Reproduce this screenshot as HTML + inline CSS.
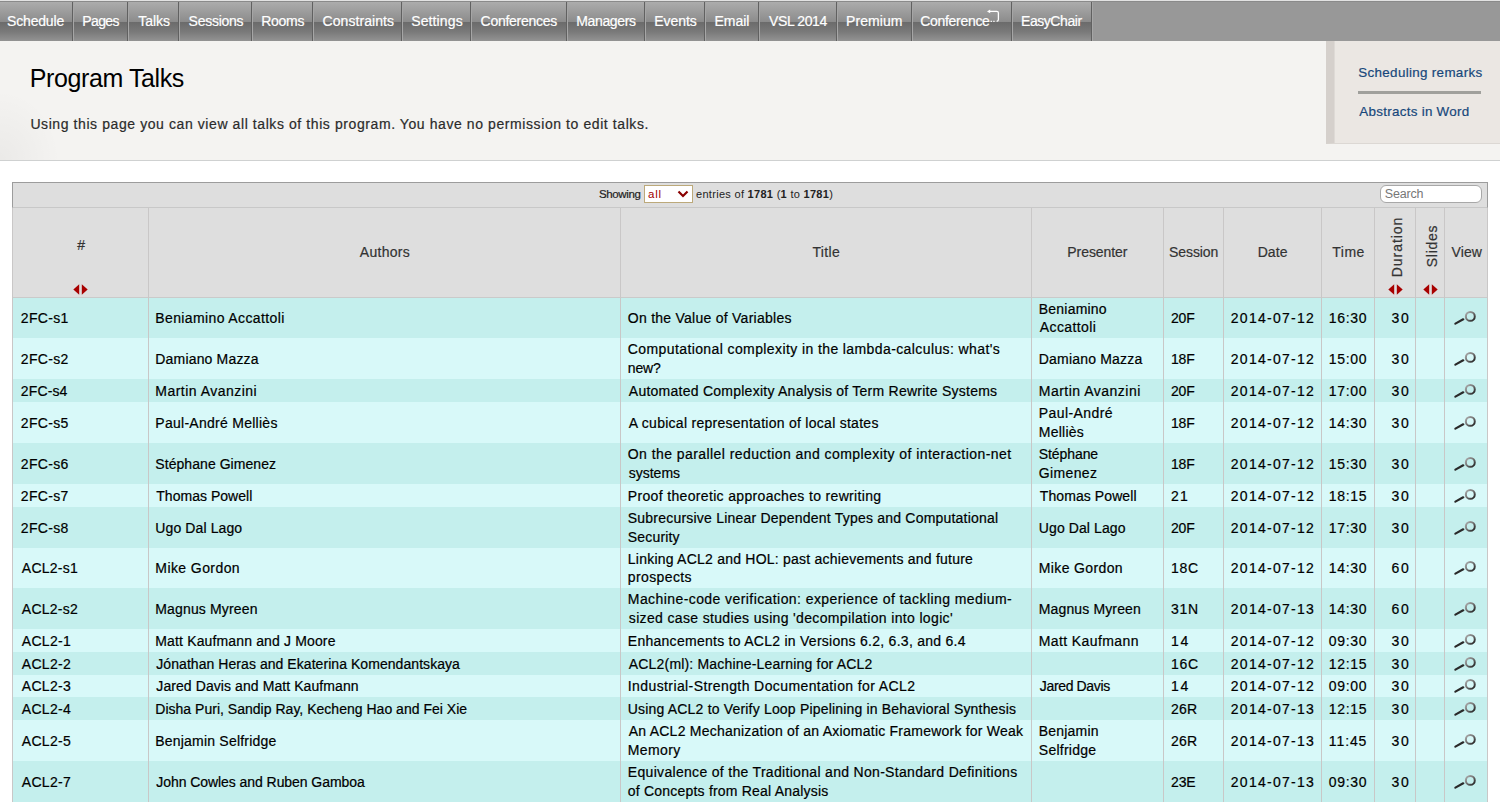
<!DOCTYPE html><html><head><meta charset="utf-8"><title>Program Talks</title><style>
*{margin:0;padding:0;box-sizing:border-box}
html,body{width:1500px;height:802px;overflow:hidden;background:#fff;font-family:"Liberation Sans",sans-serif}
.a{position:absolute;white-space:nowrap}
.tab{position:absolute;top:2px;height:39px;background:linear-gradient(#acacac 0px,#8c8c8c 19.6px,#6b6b6b 20.2px,#7a7a7a 30px,#939393 39px);color:#fff;font-size:13px;text-align:center;line-height:39px}
.sep{position:absolute;top:2px;width:1px;height:39px;background:#616161}
.sepl{position:absolute;top:2px;width:1px;height:39px;background:#a6a6a6}
.t{position:absolute;white-space:nowrap;line-height:18px}
.vl{position:absolute;width:1px;background:#c9c7c7}

</style></head><body>
<svg width="0" height="0" style="position:absolute"><defs><linearGradient id="mg" x1="0" y1="0" x2="1" y2="1"><stop offset="0" stop-color="#b0b0b0"/><stop offset="0.5" stop-color="#707070"/><stop offset="1" stop-color="#1a1a1a"/></linearGradient></defs></svg>
<div class="a" style="left:0;top:0;width:1500px;height:1px;background:#e2e2e2"></div>
<div class="a" style="left:0;top:1px;width:1500px;height:1px;background:#8a8a8a"></div>
<div class="a" style="left:0;top:2px;width:1500px;height:39px;background:#989898"></div>
<div class="tab" style="left:0px;width:72px"></div>
<div class="sep" style="left:72px"></div>
<div class="sepl" style="left:73px"></div>
<div class="tab" style="left:74px;width:53px"></div>
<div class="sep" style="left:127px"></div>
<div class="sepl" style="left:128px"></div>
<div class="tab" style="left:129px;width:49px"></div>
<div class="sep" style="left:178px"></div>
<div class="sepl" style="left:179px"></div>
<div class="tab" style="left:180px;width:71px"></div>
<div class="sep" style="left:251px"></div>
<div class="sepl" style="left:252px"></div>
<div class="tab" style="left:253px;width:59px"></div>
<div class="sep" style="left:312px"></div>
<div class="sepl" style="left:313px"></div>
<div class="tab" style="left:314px;width:87px"></div>
<div class="sep" style="left:401px"></div>
<div class="sepl" style="left:402px"></div>
<div class="tab" style="left:403px;width:67px"></div>
<div class="sep" style="left:470px"></div>
<div class="sepl" style="left:471px"></div>
<div class="tab" style="left:472px;width:94px"></div>
<div class="sep" style="left:566px"></div>
<div class="sepl" style="left:567px"></div>
<div class="tab" style="left:568px;width:76px"></div>
<div class="sep" style="left:644px"></div>
<div class="sepl" style="left:645px"></div>
<div class="tab" style="left:646px;width:58px"></div>
<div class="sep" style="left:704px"></div>
<div class="sepl" style="left:705px"></div>
<div class="tab" style="left:706px;width:52px"></div>
<div class="sep" style="left:758px"></div>
<div class="sepl" style="left:759px"></div>
<div class="tab" style="left:760px;width:76px"></div>
<div class="sep" style="left:836px"></div>
<div class="sepl" style="left:837px"></div>
<div class="tab" style="left:838px;width:73px"></div>
<div class="sep" style="left:911px"></div>
<div class="sepl" style="left:912px"></div>
<div class="tab" style="left:913px;width:98px"></div>
<div class="sep" style="left:1011px"></div>
<div class="sepl" style="left:1012px"></div>
<div class="tab" style="left:1013px;width:78px"></div>
<div class="sep" style="left:1091px"></div>
<div class="sepl" style="left:1092px"></div>
<svg class="a" style="left:985px;top:9px" width="16" height="15" viewBox="0 0 16 15"><path d="M4.6 2.4 H11.8 Q13.4 2.4 13.4 4 V10.6 Q13.4 12.3 11.8 12.3" fill="none" stroke="#fff" stroke-width="1.3"/><path d="M5.6 12.3 H11.2" fill="none" stroke="#fff" stroke-width="1.2" stroke-dasharray="1.3 1.4"/><path d="M2 2.4 L5.2 0.6 V4.2 Z" fill="#fff"/></svg>
<div class="a" style="left:0;top:41px;width:1500px;height:120px;background:#f4f3f1;border-bottom:1px solid #cfd1d1"></div>
<div class="a" style="left:0;top:41px;width:60px;height:119px;background:radial-gradient(ellipse 60px 70px at 0 119px, rgba(0,0,0,0.04), rgba(0,0,0,0))"></div>
<div class="a" style="left:1326px;top:41px;width:174px;height:103px;background:#ebe7e3;border-left:8px solid #d5d0cc;border-bottom:1px solid #dcd8d4;box-shadow:inset 1px 0 0 #dedad6"></div>
<div class="a" style="left:1358px;top:91px;width:123px;height:3px;background:#a0a09c"></div>
<div class="a" style="left:12px;top:182px;width:1476px;height:26px;background:#dedede;border:1px solid #9c9c9c;border-bottom:1px solid #c8c8c8"></div>
<div class="a" style="left:644px;top:185px;width:49px;height:18px;background:#fff;border:1px solid #bca97a"></div>
<svg class="a" style="left:677px;top:190px" width="12" height="8" viewBox="0 0 12 8"><path d="M1.5 1.5 L6 6 L10.5 1.5" fill="none" stroke="#8a0000" stroke-width="2.2"/></svg>
<div class="a" style="left:696px;top:187px;font-size:11px;line-height:14px;color:#222;letter-spacing:0.3px">entries of <b>1781</b> (<b>1</b> to <b>1781</b>)</div>
<div class="a" style="left:1380px;top:185px;width:102px;height:18px;background:#fff;border:1px solid #a8a8a8;border-radius:6px"></div>
<div class="a" style="left:12px;top:208px;width:1476px;height:90px;background:#dedede;border-left:1px solid #c8c8c8;border-right:1px solid #c8c8c8;border-bottom:1px solid #cacaca"></div>
<svg class="a" style="left:72.5px;top:283.5px" width="15" height="11" viewBox="0 0 15 11"><path d="M0.3 5.5 L6.2 0.3 V10.7 Z" fill="#a80000"/><path d="M14.7 5.5 L8.8 0.3 V10.7 Z" fill="#a80000"/></svg>
<div class="a" style="left:1396.5px;top:246.5px;transform:translate(-50%,-50%) rotate(-90deg);font-size:14px;letter-spacing:0.95px;line-height:18px;color:#333;-webkit-text-stroke:0.2px #333">Duration</div>
<div class="a" style="left:1431.5px;top:246px;transform:translate(-50%,-50%) rotate(-90deg);font-size:14px;letter-spacing:0.75px;line-height:18px;color:#333;-webkit-text-stroke:0.2px #333">Slides</div>
<svg class="a" style="left:1387.5px;top:283.5px" width="15" height="11" viewBox="0 0 15 11"><path d="M0.3 5.5 L6.2 0.3 V10.7 Z" fill="#a80000"/><path d="M14.7 5.5 L8.8 0.3 V10.7 Z" fill="#a80000"/></svg>
<svg class="a" style="left:1422.5px;top:283.5px" width="15" height="11" viewBox="0 0 15 11"><path d="M0.3 5.5 L6.2 0.3 V10.7 Z" fill="#a80000"/><path d="M14.7 5.5 L8.8 0.3 V10.7 Z" fill="#a80000"/></svg>
<div class="a" style="left:13px;top:298px;width:1474px;height:40px;background:#c4efed"></div>
<svg class="a" style="left:1453px;top:309.00px" width="24" height="16" viewBox="0 0 24 16"><path d="M2.4 14.6 L10.2 10.3" stroke="#2a2a2a" stroke-width="2.2" stroke-linecap="round"/><circle cx="17.3" cy="7.4" r="4.45" fill="none" stroke="url(#mg)" stroke-width="2"/></svg>
<div class="a" style="left:13px;top:338px;width:1474px;height:41px;background:#d8f9f9"></div>
<svg class="a" style="left:1453px;top:349.50px" width="24" height="16" viewBox="0 0 24 16"><path d="M2.4 14.6 L10.2 10.3" stroke="#2a2a2a" stroke-width="2.2" stroke-linecap="round"/><circle cx="17.3" cy="7.4" r="4.45" fill="none" stroke="url(#mg)" stroke-width="2"/></svg>
<div class="a" style="left:13px;top:379px;width:1474px;height:23px;background:#c4efed"></div>
<svg class="a" style="left:1453px;top:381.50px" width="24" height="16" viewBox="0 0 24 16"><path d="M2.4 14.6 L10.2 10.3" stroke="#2a2a2a" stroke-width="2.2" stroke-linecap="round"/><circle cx="17.3" cy="7.4" r="4.45" fill="none" stroke="url(#mg)" stroke-width="2"/></svg>
<div class="a" style="left:13px;top:402px;width:1474px;height:41px;background:#d8f9f9"></div>
<svg class="a" style="left:1453px;top:413.50px" width="24" height="16" viewBox="0 0 24 16"><path d="M2.4 14.6 L10.2 10.3" stroke="#2a2a2a" stroke-width="2.2" stroke-linecap="round"/><circle cx="17.3" cy="7.4" r="4.45" fill="none" stroke="url(#mg)" stroke-width="2"/></svg>
<div class="a" style="left:13px;top:443px;width:1474px;height:41px;background:#c4efed"></div>
<svg class="a" style="left:1453px;top:454.50px" width="24" height="16" viewBox="0 0 24 16"><path d="M2.4 14.6 L10.2 10.3" stroke="#2a2a2a" stroke-width="2.2" stroke-linecap="round"/><circle cx="17.3" cy="7.4" r="4.45" fill="none" stroke="url(#mg)" stroke-width="2"/></svg>
<div class="a" style="left:13px;top:484px;width:1474px;height:23px;background:#d8f9f9"></div>
<svg class="a" style="left:1453px;top:486.50px" width="24" height="16" viewBox="0 0 24 16"><path d="M2.4 14.6 L10.2 10.3" stroke="#2a2a2a" stroke-width="2.2" stroke-linecap="round"/><circle cx="17.3" cy="7.4" r="4.45" fill="none" stroke="url(#mg)" stroke-width="2"/></svg>
<div class="a" style="left:13px;top:507px;width:1474px;height:41px;background:#c4efed"></div>
<svg class="a" style="left:1453px;top:518.50px" width="24" height="16" viewBox="0 0 24 16"><path d="M2.4 14.6 L10.2 10.3" stroke="#2a2a2a" stroke-width="2.2" stroke-linecap="round"/><circle cx="17.3" cy="7.4" r="4.45" fill="none" stroke="url(#mg)" stroke-width="2"/></svg>
<div class="a" style="left:13px;top:548px;width:1474px;height:40px;background:#d8f9f9"></div>
<svg class="a" style="left:1453px;top:559.00px" width="24" height="16" viewBox="0 0 24 16"><path d="M2.4 14.6 L10.2 10.3" stroke="#2a2a2a" stroke-width="2.2" stroke-linecap="round"/><circle cx="17.3" cy="7.4" r="4.45" fill="none" stroke="url(#mg)" stroke-width="2"/></svg>
<div class="a" style="left:13px;top:588px;width:1474px;height:41px;background:#c4efed"></div>
<svg class="a" style="left:1453px;top:599.50px" width="24" height="16" viewBox="0 0 24 16"><path d="M2.4 14.6 L10.2 10.3" stroke="#2a2a2a" stroke-width="2.2" stroke-linecap="round"/><circle cx="17.3" cy="7.4" r="4.45" fill="none" stroke="url(#mg)" stroke-width="2"/></svg>
<div class="a" style="left:13px;top:629px;width:1474px;height:23px;background:#d8f9f9"></div>
<svg class="a" style="left:1453px;top:631.50px" width="24" height="16" viewBox="0 0 24 16"><path d="M2.4 14.6 L10.2 10.3" stroke="#2a2a2a" stroke-width="2.2" stroke-linecap="round"/><circle cx="17.3" cy="7.4" r="4.45" fill="none" stroke="url(#mg)" stroke-width="2"/></svg>
<div class="a" style="left:13px;top:652px;width:1474px;height:23px;background:#c4efed"></div>
<svg class="a" style="left:1453px;top:654.50px" width="24" height="16" viewBox="0 0 24 16"><path d="M2.4 14.6 L10.2 10.3" stroke="#2a2a2a" stroke-width="2.2" stroke-linecap="round"/><circle cx="17.3" cy="7.4" r="4.45" fill="none" stroke="url(#mg)" stroke-width="2"/></svg>
<div class="a" style="left:13px;top:675px;width:1474px;height:22px;background:#d8f9f9"></div>
<svg class="a" style="left:1453px;top:677.00px" width="24" height="16" viewBox="0 0 24 16"><path d="M2.4 14.6 L10.2 10.3" stroke="#2a2a2a" stroke-width="2.2" stroke-linecap="round"/><circle cx="17.3" cy="7.4" r="4.45" fill="none" stroke="url(#mg)" stroke-width="2"/></svg>
<div class="a" style="left:13px;top:697px;width:1474px;height:23px;background:#c4efed"></div>
<svg class="a" style="left:1453px;top:699.50px" width="24" height="16" viewBox="0 0 24 16"><path d="M2.4 14.6 L10.2 10.3" stroke="#2a2a2a" stroke-width="2.2" stroke-linecap="round"/><circle cx="17.3" cy="7.4" r="4.45" fill="none" stroke="url(#mg)" stroke-width="2"/></svg>
<div class="a" style="left:13px;top:720px;width:1474px;height:41px;background:#d8f9f9"></div>
<svg class="a" style="left:1453px;top:731.50px" width="24" height="16" viewBox="0 0 24 16"><path d="M2.4 14.6 L10.2 10.3" stroke="#2a2a2a" stroke-width="2.2" stroke-linecap="round"/><circle cx="17.3" cy="7.4" r="4.45" fill="none" stroke="url(#mg)" stroke-width="2"/></svg>
<div class="a" style="left:13px;top:761px;width:1474px;height:41px;background:#c4efed"></div>
<svg class="a" style="left:1453px;top:772.50px" width="24" height="16" viewBox="0 0 24 16"><path d="M2.4 14.6 L10.2 10.3" stroke="#2a2a2a" stroke-width="2.2" stroke-linecap="round"/><circle cx="17.3" cy="7.4" r="4.45" fill="none" stroke="url(#mg)" stroke-width="2"/></svg>
<div class="t" style="left:20.80px;top:309.05px;font-size:14.0px;letter-spacing:0.340px;color:#000;-webkit-text-stroke:0.2px #000;">2FC-s1</div>
<div class="t" style="left:155.30px;top:309.05px;font-size:14.0px;letter-spacing:0.378px;color:#000;-webkit-text-stroke:0.2px #000;">Beniamino Accattoli</div>
<div class="t" style="left:627.80px;top:309.05px;font-size:14.0px;letter-spacing:0.258px;color:#000;-webkit-text-stroke:0.2px #000;">On the Value of Variables</div>
<div class="t" style="left:1038.80px;top:299.85px;font-size:14.0px;letter-spacing:0.213px;color:#000;-webkit-text-stroke:0.2px #000;">Beniamino</div>
<div class="t" style="left:1039.80px;top:318.05px;font-size:14.0px;letter-spacing:0.400px;color:#000;-webkit-text-stroke:0.2px #000;">Accattoli</div>
<div class="t" style="left:1170.90px;top:309.05px;font-size:14.0px;letter-spacing:-0.150px;color:#000;-webkit-text-stroke:0.2px #000;">20F</div>
<div class="t" style="left:1230.80px;top:309.05px;font-size:14.0px;letter-spacing:1.267px;color:#000;-webkit-text-stroke:0.2px #000;">2014-07-12</div>
<div class="t" style="left:1328.80px;top:309.05px;font-size:14.0px;letter-spacing:0.650px;color:#000;-webkit-text-stroke:0.2px #000;">16:30</div>
<div class="t" style="left:1391.40px;top:309.05px;font-size:14.0px;letter-spacing:1.900px;color:#000;-webkit-text-stroke:0.2px #000;">30</div>
<div class="t" style="left:20.80px;top:349.55px;font-size:14.0px;letter-spacing:0.340px;color:#000;-webkit-text-stroke:0.2px #000;">2FC-s2</div>
<div class="t" style="left:155.30px;top:349.55px;font-size:14.0px;letter-spacing:0.175px;color:#000;-webkit-text-stroke:0.2px #000;">Damiano Mazza</div>
<div class="t" style="left:627.80px;top:340.35px;font-size:14.0px;letter-spacing:0.398px;color:#000;-webkit-text-stroke:0.2px #000;">Computational complexity in the lambda-calculus: what&#x27;s</div>
<div class="t" style="left:627.80px;top:358.55px;font-size:14.0px;letter-spacing:-0.167px;color:#000;-webkit-text-stroke:0.2px #000;">new?</div>
<div class="t" style="left:1038.80px;top:349.55px;font-size:14.0px;letter-spacing:0.192px;color:#000;-webkit-text-stroke:0.2px #000;">Damiano Mazza</div>
<div class="t" style="left:1170.90px;top:349.55px;font-size:14.0px;letter-spacing:-0.150px;color:#000;-webkit-text-stroke:0.2px #000;">18F</div>
<div class="t" style="left:1230.80px;top:349.55px;font-size:14.0px;letter-spacing:1.267px;color:#000;-webkit-text-stroke:0.2px #000;">2014-07-12</div>
<div class="t" style="left:1328.80px;top:349.55px;font-size:14.0px;letter-spacing:0.650px;color:#000;-webkit-text-stroke:0.2px #000;">15:00</div>
<div class="t" style="left:1391.40px;top:349.55px;font-size:14.0px;letter-spacing:1.900px;color:#000;-webkit-text-stroke:0.2px #000;">30</div>
<div class="t" style="left:20.80px;top:381.55px;font-size:14.0px;letter-spacing:0.140px;color:#000;-webkit-text-stroke:0.2px #000;">2FC-s4</div>
<div class="t" style="left:155.30px;top:381.55px;font-size:14.0px;letter-spacing:0.479px;color:#000;-webkit-text-stroke:0.2px #000;">Martin Avanzini</div>
<div class="t" style="left:628.80px;top:381.55px;font-size:14.0px;letter-spacing:0.250px;color:#000;-webkit-text-stroke:0.2px #000;">Automated Complexity Analysis of Term Rewrite Systems</div>
<div class="t" style="left:1038.80px;top:381.55px;font-size:14.0px;letter-spacing:0.486px;color:#000;-webkit-text-stroke:0.2px #000;">Martin Avanzini</div>
<div class="t" style="left:1170.90px;top:381.55px;font-size:14.0px;letter-spacing:-0.150px;color:#000;-webkit-text-stroke:0.2px #000;">20F</div>
<div class="t" style="left:1230.80px;top:381.55px;font-size:14.0px;letter-spacing:1.267px;color:#000;-webkit-text-stroke:0.2px #000;">2014-07-12</div>
<div class="t" style="left:1328.80px;top:381.55px;font-size:14.0px;letter-spacing:0.650px;color:#000;-webkit-text-stroke:0.2px #000;">17:00</div>
<div class="t" style="left:1391.40px;top:381.55px;font-size:14.0px;letter-spacing:1.900px;color:#000;-webkit-text-stroke:0.2px #000;">30</div>
<div class="t" style="left:20.80px;top:413.55px;font-size:14.0px;letter-spacing:0.340px;color:#000;-webkit-text-stroke:0.2px #000;">2FC-s5</div>
<div class="t" style="left:155.30px;top:413.55px;font-size:14.0px;letter-spacing:0.271px;color:#000;-webkit-text-stroke:0.2px #000;">Paul-André Melliès</div>
<div class="t" style="left:628.80px;top:413.55px;font-size:14.0px;letter-spacing:0.274px;color:#000;-webkit-text-stroke:0.2px #000;">A cubical representation of local states</div>
<div class="t" style="left:1038.80px;top:404.35px;font-size:14.0px;letter-spacing:0.411px;color:#000;-webkit-text-stroke:0.2px #000;">Paul-André</div>
<div class="t" style="left:1038.80px;top:422.55px;font-size:14.0px;letter-spacing:0.250px;color:#000;-webkit-text-stroke:0.2px #000;">Melliès</div>
<div class="t" style="left:1170.90px;top:413.55px;font-size:14.0px;letter-spacing:-0.150px;color:#000;-webkit-text-stroke:0.2px #000;">18F</div>
<div class="t" style="left:1230.80px;top:413.55px;font-size:14.0px;letter-spacing:1.267px;color:#000;-webkit-text-stroke:0.2px #000;">2014-07-12</div>
<div class="t" style="left:1328.80px;top:413.55px;font-size:14.0px;letter-spacing:0.650px;color:#000;-webkit-text-stroke:0.2px #000;">14:30</div>
<div class="t" style="left:1391.40px;top:413.55px;font-size:14.0px;letter-spacing:1.900px;color:#000;-webkit-text-stroke:0.2px #000;">30</div>
<div class="t" style="left:20.80px;top:454.55px;font-size:14.0px;letter-spacing:0.340px;color:#000;-webkit-text-stroke:0.2px #000;">2FC-s6</div>
<div class="t" style="left:155.30px;top:454.55px;font-size:14.0px;letter-spacing:0.060px;color:#000;-webkit-text-stroke:0.2px #000;">Stéphane Gimenez</div>
<div class="t" style="left:627.80px;top:445.35px;font-size:14.0px;letter-spacing:0.436px;color:#000;-webkit-text-stroke:0.2px #000;">On the parallel reduction and complexity of interaction-net</div>
<div class="t" style="left:628.80px;top:463.55px;font-size:14.0px;letter-spacing:-0.017px;color:#000;-webkit-text-stroke:0.2px #000;">systems</div>
<div class="t" style="left:1038.80px;top:445.35px;font-size:14.0px;letter-spacing:-0.086px;color:#000;-webkit-text-stroke:0.2px #000;">Stéphane</div>
<div class="t" style="left:1038.80px;top:463.55px;font-size:14.0px;letter-spacing:0.367px;color:#000;-webkit-text-stroke:0.2px #000;">Gimenez</div>
<div class="t" style="left:1170.90px;top:454.55px;font-size:14.0px;letter-spacing:-0.150px;color:#000;-webkit-text-stroke:0.2px #000;">18F</div>
<div class="t" style="left:1230.80px;top:454.55px;font-size:14.0px;letter-spacing:1.267px;color:#000;-webkit-text-stroke:0.2px #000;">2014-07-12</div>
<div class="t" style="left:1328.80px;top:454.55px;font-size:14.0px;letter-spacing:0.650px;color:#000;-webkit-text-stroke:0.2px #000;">15:30</div>
<div class="t" style="left:1391.40px;top:454.55px;font-size:14.0px;letter-spacing:1.900px;color:#000;-webkit-text-stroke:0.2px #000;">30</div>
<div class="t" style="left:20.80px;top:486.55px;font-size:14.0px;letter-spacing:0.340px;color:#000;-webkit-text-stroke:0.2px #000;">2FC-s7</div>
<div class="t" style="left:156.30px;top:486.55px;font-size:14.0px;letter-spacing:0.025px;color:#000;-webkit-text-stroke:0.2px #000;">Thomas Powell</div>
<div class="t" style="left:627.80px;top:486.55px;font-size:14.0px;letter-spacing:0.339px;color:#000;-webkit-text-stroke:0.2px #000;">Proof theoretic approaches to rewriting</div>
<div class="t" style="left:1039.80px;top:486.55px;font-size:14.0px;letter-spacing:0.083px;color:#000;-webkit-text-stroke:0.2px #000;">Thomas Powell</div>
<div class="t" style="left:1170.90px;top:486.55px;font-size:14.0px;letter-spacing:1.400px;color:#000;-webkit-text-stroke:0.2px #000;">21</div>
<div class="t" style="left:1230.80px;top:486.55px;font-size:14.0px;letter-spacing:1.267px;color:#000;-webkit-text-stroke:0.2px #000;">2014-07-12</div>
<div class="t" style="left:1328.80px;top:486.55px;font-size:14.0px;letter-spacing:0.650px;color:#000;-webkit-text-stroke:0.2px #000;">18:15</div>
<div class="t" style="left:1391.40px;top:486.55px;font-size:14.0px;letter-spacing:1.900px;color:#000;-webkit-text-stroke:0.2px #000;">30</div>
<div class="t" style="left:20.80px;top:518.55px;font-size:14.0px;letter-spacing:0.340px;color:#000;-webkit-text-stroke:0.2px #000;">2FC-s8</div>
<div class="t" style="left:155.30px;top:518.55px;font-size:14.0px;letter-spacing:0.109px;color:#000;-webkit-text-stroke:0.2px #000;">Ugo Dal Lago</div>
<div class="t" style="left:627.80px;top:509.35px;font-size:14.0px;letter-spacing:0.212px;color:#000;-webkit-text-stroke:0.2px #000;">Subrecursive Linear Dependent Types and Computational</div>
<div class="t" style="left:627.80px;top:527.55px;font-size:14.0px;letter-spacing:0.171px;color:#000;-webkit-text-stroke:0.2px #000;">Security</div>
<div class="t" style="left:1038.80px;top:518.55px;font-size:14.0px;letter-spacing:0.100px;color:#000;-webkit-text-stroke:0.2px #000;">Ugo Dal Lago</div>
<div class="t" style="left:1170.90px;top:518.55px;font-size:14.0px;letter-spacing:-0.150px;color:#000;-webkit-text-stroke:0.2px #000;">20F</div>
<div class="t" style="left:1230.80px;top:518.55px;font-size:14.0px;letter-spacing:1.267px;color:#000;-webkit-text-stroke:0.2px #000;">2014-07-12</div>
<div class="t" style="left:1328.80px;top:518.55px;font-size:14.0px;letter-spacing:0.650px;color:#000;-webkit-text-stroke:0.2px #000;">17:30</div>
<div class="t" style="left:1391.40px;top:518.55px;font-size:14.0px;letter-spacing:1.900px;color:#000;-webkit-text-stroke:0.2px #000;">30</div>
<div class="t" style="left:21.80px;top:559.05px;font-size:14.0px;letter-spacing:0.250px;color:#000;-webkit-text-stroke:0.2px #000;">ACL2-s1</div>
<div class="t" style="left:155.30px;top:559.05px;font-size:14.0px;letter-spacing:0.420px;color:#000;-webkit-text-stroke:0.2px #000;">Mike Gordon</div>
<div class="t" style="left:627.80px;top:549.85px;font-size:14.0px;letter-spacing:0.229px;color:#000;-webkit-text-stroke:0.2px #000;">Linking ACL2 and HOL: past achievements and future</div>
<div class="t" style="left:627.80px;top:568.05px;font-size:14.0px;letter-spacing:0.388px;color:#000;-webkit-text-stroke:0.2px #000;">prospects</div>
<div class="t" style="left:1038.80px;top:559.05px;font-size:14.0px;letter-spacing:0.370px;color:#000;-webkit-text-stroke:0.2px #000;">Mike Gordon</div>
<div class="t" style="left:1170.90px;top:559.05px;font-size:14.0px;letter-spacing:0.750px;color:#000;-webkit-text-stroke:0.2px #000;">18C</div>
<div class="t" style="left:1230.80px;top:559.05px;font-size:14.0px;letter-spacing:1.267px;color:#000;-webkit-text-stroke:0.2px #000;">2014-07-12</div>
<div class="t" style="left:1328.80px;top:559.05px;font-size:14.0px;letter-spacing:0.650px;color:#000;-webkit-text-stroke:0.2px #000;">14:30</div>
<div class="t" style="left:1391.40px;top:559.05px;font-size:14.0px;letter-spacing:1.900px;color:#000;-webkit-text-stroke:0.2px #000;">60</div>
<div class="t" style="left:21.80px;top:599.55px;font-size:14.0px;letter-spacing:0.250px;color:#000;-webkit-text-stroke:0.2px #000;">ACL2-s2</div>
<div class="t" style="left:155.30px;top:599.55px;font-size:14.0px;letter-spacing:0.150px;color:#000;-webkit-text-stroke:0.2px #000;">Magnus Myreen</div>
<div class="t" style="left:627.80px;top:590.35px;font-size:14.0px;letter-spacing:0.421px;color:#000;-webkit-text-stroke:0.2px #000;">Machine-code verification: experience of tackling medium-</div>
<div class="t" style="left:628.80px;top:608.55px;font-size:14.0px;letter-spacing:0.346px;color:#000;-webkit-text-stroke:0.2px #000;">sized case studies using &#x27;decompilation into logic&#x27;</div>
<div class="t" style="left:1038.80px;top:599.55px;font-size:14.0px;letter-spacing:0.133px;color:#000;-webkit-text-stroke:0.2px #000;">Magnus Myreen</div>
<div class="t" style="left:1170.90px;top:599.55px;font-size:14.0px;letter-spacing:0.750px;color:#000;-webkit-text-stroke:0.2px #000;">31N</div>
<div class="t" style="left:1230.80px;top:599.55px;font-size:14.0px;letter-spacing:1.267px;color:#000;-webkit-text-stroke:0.2px #000;">2014-07-13</div>
<div class="t" style="left:1328.80px;top:599.55px;font-size:14.0px;letter-spacing:0.650px;color:#000;-webkit-text-stroke:0.2px #000;">14:30</div>
<div class="t" style="left:1391.40px;top:599.55px;font-size:14.0px;letter-spacing:1.900px;color:#000;-webkit-text-stroke:0.2px #000;">60</div>
<div class="t" style="left:21.80px;top:631.55px;font-size:14.0px;letter-spacing:0.300px;color:#000;-webkit-text-stroke:0.2px #000;">ACL2-1</div>
<div class="t" style="left:155.30px;top:631.55px;font-size:14.0px;letter-spacing:0.146px;color:#000;-webkit-text-stroke:0.2px #000;">Matt Kaufmann and J Moore</div>
<div class="t" style="left:627.80px;top:631.55px;font-size:14.0px;letter-spacing:0.269px;color:#000;-webkit-text-stroke:0.2px #000;">Enhancements to ACL2 in Versions 6.2, 6.3, and 6.4</div>
<div class="t" style="left:1038.80px;top:631.55px;font-size:14.0px;letter-spacing:0.392px;color:#000;-webkit-text-stroke:0.2px #000;">Matt Kaufmann</div>
<div class="t" style="left:1170.90px;top:631.55px;font-size:14.0px;letter-spacing:1.900px;color:#000;-webkit-text-stroke:0.2px #000;">14</div>
<div class="t" style="left:1230.80px;top:631.55px;font-size:14.0px;letter-spacing:1.267px;color:#000;-webkit-text-stroke:0.2px #000;">2014-07-12</div>
<div class="t" style="left:1328.80px;top:631.55px;font-size:14.0px;letter-spacing:0.650px;color:#000;-webkit-text-stroke:0.2px #000;">09:30</div>
<div class="t" style="left:1391.40px;top:631.55px;font-size:14.0px;letter-spacing:1.900px;color:#000;-webkit-text-stroke:0.2px #000;">30</div>
<div class="t" style="left:21.80px;top:654.55px;font-size:14.0px;letter-spacing:0.300px;color:#000;-webkit-text-stroke:0.2px #000;">ACL2-2</div>
<div class="t" style="left:156.30px;top:654.55px;font-size:14.0px;letter-spacing:0.057px;color:#000;-webkit-text-stroke:0.2px #000;">Jónathan Heras and Ekaterina Komendantskaya</div>
<div class="t" style="left:628.80px;top:654.55px;font-size:14.0px;letter-spacing:0.182px;color:#000;-webkit-text-stroke:0.2px #000;">ACL2(ml): Machine-Learning for ACL2</div>
<div class="t" style="left:1170.90px;top:654.55px;font-size:14.0px;letter-spacing:0.750px;color:#000;-webkit-text-stroke:0.2px #000;">16C</div>
<div class="t" style="left:1230.80px;top:654.55px;font-size:14.0px;letter-spacing:1.267px;color:#000;-webkit-text-stroke:0.2px #000;">2014-07-12</div>
<div class="t" style="left:1328.80px;top:654.55px;font-size:14.0px;letter-spacing:0.650px;color:#000;-webkit-text-stroke:0.2px #000;">12:15</div>
<div class="t" style="left:1391.40px;top:654.55px;font-size:14.0px;letter-spacing:1.900px;color:#000;-webkit-text-stroke:0.2px #000;">30</div>
<div class="t" style="left:21.80px;top:677.05px;font-size:14.0px;letter-spacing:0.300px;color:#000;-webkit-text-stroke:0.2px #000;">ACL2-3</div>
<div class="t" style="left:156.30px;top:677.05px;font-size:14.0px;letter-spacing:0.082px;color:#000;-webkit-text-stroke:0.2px #000;">Jared Davis and Matt Kaufmann</div>
<div class="t" style="left:627.80px;top:677.05px;font-size:14.0px;letter-spacing:0.402px;color:#000;-webkit-text-stroke:0.2px #000;">Industrial-Strength Documentation for ACL2</div>
<div class="t" style="left:1039.80px;top:677.05px;font-size:14.0px;letter-spacing:-0.350px;color:#000;-webkit-text-stroke:0.2px #000;">Jared Davis</div>
<div class="t" style="left:1170.90px;top:677.05px;font-size:14.0px;letter-spacing:1.900px;color:#000;-webkit-text-stroke:0.2px #000;">14</div>
<div class="t" style="left:1230.80px;top:677.05px;font-size:14.0px;letter-spacing:1.267px;color:#000;-webkit-text-stroke:0.2px #000;">2014-07-12</div>
<div class="t" style="left:1328.80px;top:677.05px;font-size:14.0px;letter-spacing:0.650px;color:#000;-webkit-text-stroke:0.2px #000;">09:00</div>
<div class="t" style="left:1391.40px;top:677.05px;font-size:14.0px;letter-spacing:1.900px;color:#000;-webkit-text-stroke:0.2px #000;">30</div>
<div class="t" style="left:21.80px;top:699.55px;font-size:14.0px;letter-spacing:0.300px;color:#000;-webkit-text-stroke:0.2px #000;">ACL2-4</div>
<div class="t" style="left:155.30px;top:699.55px;font-size:14.0px;letter-spacing:0.017px;color:#000;-webkit-text-stroke:0.2px #000;">Disha Puri, Sandip Ray, Kecheng Hao and Fei Xie</div>
<div class="t" style="left:627.80px;top:699.55px;font-size:14.0px;letter-spacing:0.183px;color:#000;-webkit-text-stroke:0.2px #000;">Using ACL2 to Verify Loop Pipelining in Behavioral Synthesis</div>
<div class="t" style="left:1170.90px;top:699.55px;font-size:14.0px;letter-spacing:0.300px;color:#000;-webkit-text-stroke:0.2px #000;">26R</div>
<div class="t" style="left:1230.80px;top:699.55px;font-size:14.0px;letter-spacing:1.267px;color:#000;-webkit-text-stroke:0.2px #000;">2014-07-13</div>
<div class="t" style="left:1328.80px;top:699.55px;font-size:14.0px;letter-spacing:0.650px;color:#000;-webkit-text-stroke:0.2px #000;">12:15</div>
<div class="t" style="left:1391.40px;top:699.55px;font-size:14.0px;letter-spacing:1.900px;color:#000;-webkit-text-stroke:0.2px #000;">30</div>
<div class="t" style="left:21.80px;top:731.55px;font-size:14.0px;letter-spacing:0.300px;color:#000;-webkit-text-stroke:0.2px #000;">ACL2-5</div>
<div class="t" style="left:155.30px;top:731.55px;font-size:14.0px;letter-spacing:0.200px;color:#000;-webkit-text-stroke:0.2px #000;">Benjamin Selfridge</div>
<div class="t" style="left:628.80px;top:722.35px;font-size:14.0px;letter-spacing:0.227px;color:#000;-webkit-text-stroke:0.2px #000;">An ACL2 Mechanization of an Axiomatic Framework for Weak</div>
<div class="t" style="left:627.80px;top:740.55px;font-size:14.0px;letter-spacing:0.380px;color:#000;-webkit-text-stroke:0.2px #000;">Memory</div>
<div class="t" style="left:1038.80px;top:722.35px;font-size:14.0px;letter-spacing:0.186px;color:#000;-webkit-text-stroke:0.2px #000;">Benjamin</div>
<div class="t" style="left:1038.80px;top:740.55px;font-size:14.0px;letter-spacing:0.250px;color:#000;-webkit-text-stroke:0.2px #000;">Selfridge</div>
<div class="t" style="left:1170.90px;top:731.55px;font-size:14.0px;letter-spacing:0.300px;color:#000;-webkit-text-stroke:0.2px #000;">26R</div>
<div class="t" style="left:1230.80px;top:731.55px;font-size:14.0px;letter-spacing:1.267px;color:#000;-webkit-text-stroke:0.2px #000;">2014-07-13</div>
<div class="t" style="left:1328.80px;top:731.55px;font-size:14.0px;letter-spacing:0.900px;color:#000;-webkit-text-stroke:0.2px #000;">11:45</div>
<div class="t" style="left:1391.40px;top:731.55px;font-size:14.0px;letter-spacing:1.900px;color:#000;-webkit-text-stroke:0.2px #000;">30</div>
<div class="t" style="left:21.80px;top:772.55px;font-size:14.0px;letter-spacing:0.300px;color:#000;-webkit-text-stroke:0.2px #000;">ACL2-7</div>
<div class="t" style="left:156.30px;top:772.55px;font-size:14.0px;letter-spacing:-0.063px;color:#000;-webkit-text-stroke:0.2px #000;">John Cowles and Ruben Gamboa</div>
<div class="t" style="left:627.80px;top:763.35px;font-size:14.0px;letter-spacing:0.312px;color:#000;-webkit-text-stroke:0.2px #000;">Equivalence of the Traditional and Non-Standard Definitions</div>
<div class="t" style="left:627.80px;top:781.55px;font-size:14.0px;letter-spacing:0.207px;color:#000;-webkit-text-stroke:0.2px #000;">of Concepts from Real Analysis</div>
<div class="t" style="left:1170.90px;top:772.55px;font-size:14.0px;letter-spacing:-0.050px;color:#000;-webkit-text-stroke:0.2px #000;">23E</div>
<div class="t" style="left:1230.80px;top:772.55px;font-size:14.0px;letter-spacing:1.267px;color:#000;-webkit-text-stroke:0.2px #000;">2014-07-13</div>
<div class="t" style="left:1328.80px;top:772.55px;font-size:14.0px;letter-spacing:0.650px;color:#000;-webkit-text-stroke:0.2px #000;">09:30</div>
<div class="t" style="left:1391.40px;top:772.55px;font-size:14.0px;letter-spacing:1.900px;color:#000;-webkit-text-stroke:0.2px #000;">30</div>
<div class="t" style="left:7.10px;top:12.05px;font-size:14px;letter-spacing:-0.186px;color:#fff;-webkit-text-stroke:0.2px #fff;">Schedule</div>
<div class="t" style="left:82.30px;top:12.05px;font-size:14px;letter-spacing:-0.625px;color:#fff;-webkit-text-stroke:0.2px #fff;">Pages</div>
<div class="t" style="left:138.30px;top:12.05px;font-size:14px;letter-spacing:-0.025px;color:#fff;-webkit-text-stroke:0.2px #fff;">Talks</div>
<div class="t" style="left:188.60px;top:12.05px;font-size:14px;letter-spacing:-0.257px;color:#fff;-webkit-text-stroke:0.2px #fff;">Sessions</div>
<div class="t" style="left:261.30px;top:12.05px;font-size:14px;letter-spacing:-0.300px;color:#fff;-webkit-text-stroke:0.2px #fff;">Rooms</div>
<div class="t" style="left:322.50px;top:12.05px;font-size:14px;letter-spacing:0.070px;color:#fff;-webkit-text-stroke:0.2px #fff;">Constraints</div>
<div class="t" style="left:411.20px;top:12.05px;font-size:14px;letter-spacing:0.129px;color:#fff;-webkit-text-stroke:0.2px #fff;">Settings</div>
<div class="t" style="left:480.60px;top:12.05px;font-size:14px;letter-spacing:-0.280px;color:#fff;-webkit-text-stroke:0.2px #fff;">Conferences</div>
<div class="t" style="left:576.20px;top:12.05px;font-size:14px;letter-spacing:-0.343px;color:#fff;-webkit-text-stroke:0.2px #fff;">Managers</div>
<div class="t" style="left:654.30px;top:12.05px;font-size:14px;letter-spacing:-0.060px;color:#fff;-webkit-text-stroke:0.2px #fff;">Events</div>
<div class="t" style="left:714.40px;top:12.05px;font-size:14px;letter-spacing:0.000px;color:#fff;-webkit-text-stroke:0.2px #fff;">Email</div>
<div class="t" style="left:769.00px;top:12.05px;font-size:14px;letter-spacing:-0.386px;color:#fff;-webkit-text-stroke:0.2px #fff;">VSL 2014</div>
<div class="t" style="left:846.10px;top:12.05px;font-size:14px;letter-spacing:0.050px;color:#fff;-webkit-text-stroke:0.2px #fff;">Premium</div>
<div class="t" style="left:920.20px;top:12.05px;font-size:14px;letter-spacing:-0.300px;color:#fff;-webkit-text-stroke:0.2px #fff;">Conference</div>
<div class="t" style="left:1021.00px;top:12.05px;font-size:14px;letter-spacing:-0.438px;color:#fff;-webkit-text-stroke:0.2px #fff;">EasyChair</div>
<div class="t" style="left:29.80px;top:69.34px;font-size:25px;letter-spacing:-0.400px;color:#000;">Program Talks</div>
<div class="t" style="left:30.40px;top:114.95px;font-size:14px;letter-spacing:0.585px;color:#2b2b2b;-webkit-text-stroke:0.2px #2b2b2b;">Using this page you can view all talks of this program. You have no permission to edit talks.</div>
<div class="t" style="left:1358.30px;top:63.86px;font-size:13.4px;letter-spacing:0.324px;color:#17477b;-webkit-text-stroke:0.2px #17477b;">Scheduling remarks</div>
<div class="t" style="left:1359.30px;top:103.36px;font-size:13.4px;letter-spacing:0.281px;color:#17477b;-webkit-text-stroke:0.2px #17477b;">Abstracts in Word</div>
<div class="t" style="left:359.80px;top:243.15px;font-size:14px;letter-spacing:0.283px;color:#333;-webkit-text-stroke:0.2px #333;">Authors</div>
<div class="t" style="left:812.40px;top:243.15px;font-size:14px;letter-spacing:0.350px;color:#333;-webkit-text-stroke:0.2px #333;">Title</div>
<div class="t" style="left:1067.30px;top:243.15px;font-size:14px;letter-spacing:-0.062px;color:#333;-webkit-text-stroke:0.2px #333;">Presenter</div>
<div class="t" style="left:1169.00px;top:243.15px;font-size:14px;letter-spacing:-0.083px;color:#333;-webkit-text-stroke:0.2px #333;">Session</div>
<div class="t" style="left:1257.70px;top:243.15px;font-size:14px;letter-spacing:0.067px;color:#333;-webkit-text-stroke:0.2px #333;">Date</div>
<div class="t" style="left:1332.20px;top:243.15px;font-size:14px;letter-spacing:0.533px;color:#333;-webkit-text-stroke:0.2px #333;">Time</div>
<div class="t" style="left:1451.60px;top:243.15px;font-size:14px;letter-spacing:0.067px;color:#333;-webkit-text-stroke:0.2px #333;">View</div>
<div class="t" style="left:77.20px;top:236.15px;font-size:14px;letter-spacing:0.000px;color:#333;-webkit-text-stroke:0.2px #333;">#</div>
<div class="t" style="left:599.00px;top:184.92px;font-size:11.5px;letter-spacing:-0.367px;color:#222;-webkit-text-stroke:0.2px #222;">Showing</div>
<div class="t" style="left:648.10px;top:184.92px;font-size:11.5px;letter-spacing:0.700px;color:#a00000;">all</div>
<div class="t" style="left:1384.80px;top:185.37px;font-size:12.5px;letter-spacing:-0.200px;color:#777;">Search</div>
<div class="vl" style="left:148px;top:208px;height:594px"></div>
<div class="vl" style="left:620px;top:208px;height:594px"></div>
<div class="vl" style="left:1031px;top:208px;height:594px"></div>
<div class="vl" style="left:1163px;top:208px;height:594px"></div>
<div class="vl" style="left:1223px;top:208px;height:594px"></div>
<div class="vl" style="left:1321px;top:208px;height:594px"></div>
<div class="vl" style="left:1374px;top:208px;height:594px"></div>
<div class="vl" style="left:1415px;top:208px;height:594px"></div>
<div class="vl" style="left:1444px;top:208px;height:594px"></div>
<div class="vl" style="left:12px;top:208px;height:594px"></div>
<div class="vl" style="left:1487px;top:208px;height:594px"></div>
</body></html>
